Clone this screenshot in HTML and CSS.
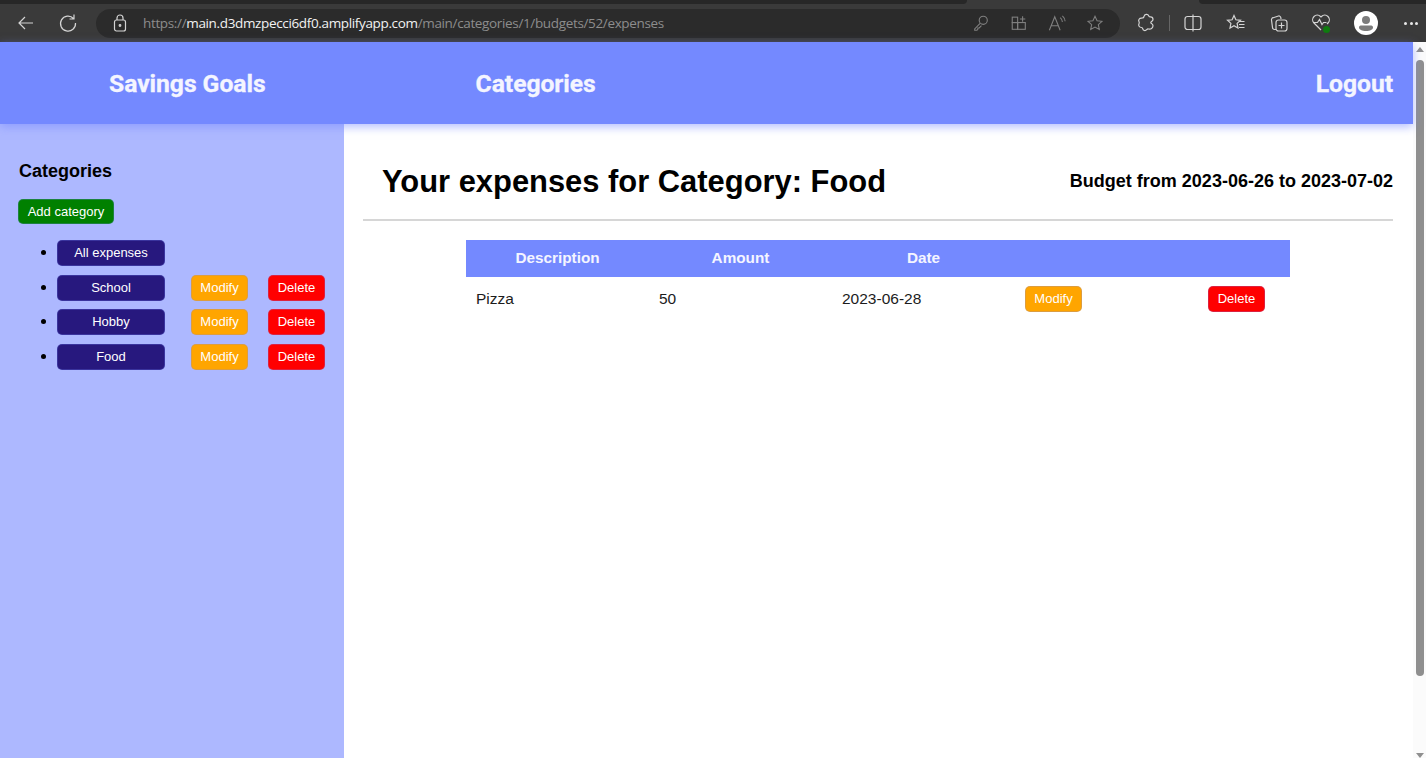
FILE: index.html
```html
<!DOCTYPE html>
<html>
<head>
<meta name="viewport" content="width=device-width, initial-scale=1">
<title>Expenses</title>
<link rel="stylesheet" href="styles.css">
</head>
<body>
<div class="browser">
  <div class="tabstrip">
    <div class="tab-left"></div>
    <div class="tab-right"></div>
  </div>
  <div class="toolbar">
    <svg class="tb-icon tb-back" viewBox="0 0 20 20"><path d="M17 10H3M9 4l-6 6 6 6"/></svg>
    <svg class="tb-icon tb-reload" viewBox="0 0 20 20"><path d="M15.500 5.500A7.500 7.500 0 1 0 17.500 10M16 1.500v4.500h-4.500"/></svg>
    <div class="address">
      <svg class="tb-icon tb-lock" viewBox="0 0 16 20"><rect x="2.500" y="7" width="11" height="11" rx="2"/><path d="M5 7V5a3 3 0 0 1 6 0v2"/><circle cx="8" cy="12.500" r="0.800"/></svg>
      <span class="url"><span class="url-dim">https://</span><span class="url-host">main.d3dmzpecci6df0.amplifyapp.com</span><span class="url-dim">/main/categories/1/budgets/52/expenses</span></span>
      <div class="address-icons">
        <svg class="tb-icon dim" viewBox="0 0 20 20"><circle cx="12.500" cy="7" r="4.500"/><path d="M9 10.500l-6 6v1.500h2.500l1-1v-1.500h1.500l2.500-2.500"/></svg>
        <svg class="tb-icon dim" viewBox="0 0 20 20"><rect x="2.500" y="3.500" width="6" height="6"/><rect x="2.500" y="9.500" width="6" height="7.500"/><rect x="8.500" y="9.500" width="8.500" height="7.500"/><path d="M11 5.500h6M14 2.500v6"/></svg>
        <svg class="tb-icon dim" viewBox="0 0 20 20"><path d="M1.500 18L7.500 3l6 15M3.500 13h8M13.500 4a6 6 0 0 1 2.500 5M16 2a9 9 0 0 1 3 6"/></svg>
        <svg class="tb-icon dim" viewBox="0 0 20 20"><path d="M10 2.500l2.300 5 5.400.6-4 3.700 1.100 5.400L10 14.500l-4.800 2.700 1.100-5.400-4-3.700 5.400-.6z"/></svg>
      </div>
    </div>
    <div class="tools">
      <svg class="tb-icon" viewBox="0 0 20 20"><path d="M8 3.500a2.500 2.500 0 0 1 4.800-.5c.3.800 1 .9 1.700.9 1.500 0 2.500 1 2.500 2.500 0 1-.8 1.600-1.500 2-.9.500-.9 1.700 0 2.200.7.400 1.500 1 1.500 2.100 0 2.300-2.200 3.800-4.500 3.300-.7-.2-1.300.1-1.800.7-1.400 1.700-3.700.9-4-1.100-.1-.7-.6-1.100-1.300-1.100-2 0-3.400-2-2.400-3.800.4-.7.400-1.300 0-2-1-1.800.4-3.600 2.400-3.600 1.500 0 2.600-.7 2.600-1.900z"/></svg>
      <span class="tool-sep"></span>
      <svg class="tb-icon tool-split" viewBox="0 0 20 20"><rect x="2" y="3.500" width="16" height="13" rx="2.500"/><path d="M10 1.500v17"/></svg>
      <svg class="tb-icon tool-fav" viewBox="0 0 20 20"><path d="M8 2.500l1.900 4.300 4.600.5-3.400 3.100.9 4.600L8 12.700l-4 2.300.9-4.600L1.500 7.300l4.600-.5zM13 8.500h5.500M13 11.500h5.500M13 14.500h5.500"/></svg>
      <svg class="tb-icon tool-coll" viewBox="0 0 20 20"><path d="M7 16.500H5.500a2 2 0 0 1-2-2l-1-7.500a2 2 0 0 1 1.700-2.300L9.500 3a2 2 0 0 1 2.300 1.700L12 6"/><rect x="7" y="7" width="11" height="11" rx="2.500"/><path d="M12.500 9.500v6M9.500 12.500h6"/></svg>
      <span class="tool-health">
        <svg class="tb-icon" viewBox="0 0 20 20"><path d="M10 17L3 10a4.500 4.500 0 0 1 6.500-6.500l.5.5.5-.5A4.500 4.500 0 0 1 17 10l-1 1M2 9.500h4.500l2-3 2.500 5 1.500-2h3"/></svg>
        <span class="health-dot"></span>
      </span>
      <span class="avatar">
        <svg viewBox="0 0 24 24"><circle cx="12" cy="12" r="12" fill="#fff"/><circle cx="12" cy="9" r="4" fill="#7b7b7b"/><path d="M5 16.500c0-1.500 1-2 2.500-2h9c1.500 0 2.500.5 2.500 2 0 2-3 3.500-7 3.500s-7-1.500-7-3.500z" fill="#7b7b7b"/></svg>
      </span>
      <span class="more"><i></i><i></i><i></i></span>
    </div>
  </div>
</div>

<div class="window">
  <div class="page">
    <header class="nav">
      <a class="nav-goals">Savings Goals</a>
      <a class="nav-cats">Categories</a>
      <a class="nav-logout">Logout</a>
    </header>
    <div class="content">
      <aside class="sidebar">
        <h3>Categories</h3>
        <button class="btn btn-add">Add category</button>
        <ul class="cat-list">
          <li><div class="cat-row"><button class="btn btn-cat">All expenses</button></div></li>
          <li><div class="cat-row"><button class="btn btn-cat">School</button><button class="btn btn-modify">Modify</button><button class="btn btn-delete">Delete</button></div></li>
          <li><div class="cat-row"><button class="btn btn-cat">Hobby</button><button class="btn btn-modify">Modify</button><button class="btn btn-delete">Delete</button></div></li>
          <li><div class="cat-row"><button class="btn btn-cat">Food</button><button class="btn btn-modify">Modify</button><button class="btn btn-delete">Delete</button></div></li>
        </ul>
      </aside>
      <main class="main">
        <div class="main-head">
          <h1>Your expenses for Category: Food</h1>
          <h2>Budget from 2023-06-26 to 2023-07-02</h2>
        </div>
        <hr>
        <table class="expenses">
          <thead>
            <tr><th>Description</th><th>Amount</th><th>Date</th><th></th><th></th></tr>
          </thead>
          <tbody>
            <tr>
              <td>Pizza</td>
              <td>50</td>
              <td>2023-06-28</td>
              <td><button class="btn btn-modify">Modify</button></td>
              <td><button class="btn btn-delete">Delete</button></td>
            </tr>
          </tbody>
        </table>
      </main>
    </div>
  </div>
  <div class="scrollbar">
    <span class="arrow-up"></span>
    <span class="thumb"></span>
    <span class="arrow-down"></span>
  </div>
</div>
</body>
</html>
```

FILE: styles.css
```css
* {
  box-sizing: border-box;
}
html, body {
  height: 100%;
}
body {
  margin: 0;
  display: flex;
  flex-direction: column;
  overflow: hidden;
  font-family: "Liberation Sans", Arial, sans-serif;
  background: #fff;
  color: #000;
}

/* browser chrome */
.browser {
  height: 42px;
  flex: none;
  background: #3a3a3a;
  display: flex;
  flex-direction: column;
}
.tabstrip {
  height: 5px;
  display: flex;
  justify-content: space-between;
}
.tab-left {
  width: 967px;
  height: 4px;
  background: #272727;
  border-bottom-right-radius: 6px;
}
.tab-right {
  width: 227px;
  height: 4px;
  background: #272727;
  border-bottom-left-radius: 6px;
}
.toolbar {
  height: 37px;
  display: flex;
  align-items: center;
  padding-bottom: 1px;
}
.tb-icon {
  width: 20px;
  height: 20px;
  fill: none;
  stroke: #d4d4d4;
  stroke-width: 1.2;
  flex: none;
}
.tb-icon.dim {
  stroke: #808080;
}
.tb-back {
  margin-left: 16px;
}
.tb-reload {
  margin-left: 22px;
}
.address {
  width: 1024px;
  height: 29px;
  margin-left: 18px;
  border-radius: 15px;
  background: #2b2b2b;
  display: flex;
  align-items: center;
  padding-left: 16px;
}
.tb-lock {
  width: 16px;
  height: 20px;
}
.url {
  margin-left: 15px;
  font-family: "Open Sans", sans-serif;
  font-size: 13.5px;
  letter-spacing: -0.35px;
  white-space: nowrap;
}
.url-dim {
  color: #8d8d8d;
}
.url-host {
  color: #f2f2f2;
}
.address-icons {
  margin-left: auto;
  margin-right: 16px;
  display: flex;
  gap: 20px;
}
.address-icons .tb-icon {
  width: 18px;
  height: 18px;
}
.tools {
  display: flex;
  align-items: center;
  margin-left: 16px;
}
.tool-sep {
  width: 1px;
  height: 16px;
  background: #666;
  margin-left: 13px;
}
.tool-split {
  margin-left: 13px;
}
.tool-fav {
  margin-left: 23px;
}
.tool-coll {
  margin-left: 23px;
}
.tool-health {
  position: relative;
  margin-left: 22px;
  display: flex;
}
.health-dot {
  position: absolute;
  right: 1px;
  bottom: 0;
  width: 7px;
  height: 7px;
  border-radius: 50%;
  background: #0f7b0f;
}
.avatar {
  width: 24px;
  height: 24px;
  margin-left: 23px;
  display: flex;
}
.more {
  display: flex;
  gap: 2.500px;
  margin-left: 26px;
}
.more i {
  width: 3px;
  height: 3px;
  border-radius: 50%;
  background: #e8e8e8;
}

/* page */
.window {
  flex: 1;
  display: flex;
  min-height: 0;
}
.page {
  flex: 1;
  min-width: 0;
  display: flex;
  flex-direction: column;
}
.nav {
  height: 82px;
  flex: none;
  background: #7489ff;
  box-shadow: 0 3px 9px rgba(116, 137, 255, 0.55);
  position: relative;
  display: flex;
  align-items: center;
  font-family: Roboto, sans-serif;
  font-weight: 700;
  font-size: 24.7px;
  letter-spacing: -0.05px;
  -webkit-text-stroke: 0.3px #f4f5ff;
  color: #f4f5ff;
  padding: 1px 20px 0 109px;
}
.nav-cats {
  margin-left: 210px;
}
.nav-logout {
  margin-left: auto;
}
.content {
  flex: 1;
  display: flex;
  min-height: 0;
}
.sidebar {
  width: 344px;
  flex: none;
  background: #adb8ff;
  padding: 37px 18px 0;
}
.sidebar h3 {
  margin: 0 0 18px;
  font-size: 18px;
  line-height: 20px;
  font-weight: 700;
  padding-left: 1px;
}
.btn {
  border: 1px solid rgba(116, 137, 255, 0.25);
  border-radius: 5px;
  color: #fff;
  font-family: inherit;
  font-size: 13px;
  height: 26px;
  padding: 0 0 1px;
  display: block;
  flex: none;
}
.btn-add {
  width: 96px;
  height: 25px;
  background: #008000;
}
.btn-cat {
  width: 108px;
  background: #27187e;
}
.btn-modify {
  width: 57px;
  background: #ffa500;
}
.btn-delete {
  width: 57px;
  background: #ff0000;
}
.cat-list {
  margin: 16px 0 0;
  padding: 0 0 0 39px;
}
.cat-list li {
  margin-bottom: 8.700px;
}
.cat-row {
  display: flex;
  height: 26px;
}
.cat-row .btn-modify {
  margin-left: 26px;
}
.cat-row .btn-delete {
  margin-left: 20px;
}
.main {
  flex: 1;
  min-width: 0;
  padding: 0 20px 0 19px;
}
.main-head {
  height: 95px;
  display: flex;
  align-items: center;
  justify-content: space-between;
  padding: 20px 0 0 19px;
}
.main-head h1 {
  margin: 0;
  font-size: 30.900px;
  font-weight: 700;
}
.main-head h2 {
  margin: 0;
  font-size: 18px;
  font-weight: 700;
}
hr {
  margin: 0;
  border: 0;
  border-top: 2px solid #d6d6d6;
}
.expenses {
  margin: 19px 0 0 103px;
  width: 824px;
  table-layout: fixed;
  border-collapse: collapse;
  font-size: 15.500px;
}
.expenses th {
  width: 183px;
  height: 37px;
  padding: 0 0 2px;
  background: #7489ff;
  color: #f4f5ff;
  font-weight: 700;
  font-size: 15.300px;
}
.expenses th:last-child {
  width: 92px;
}
.expenses td {
  height: 44px;
  padding: 0 0 0 10px;
  color: #1c1c1c;
}

/* scrollbar */
.scrollbar {
  width: 13px;
  flex: none;
  background: #fbfbfb;
  display: flex;
  flex-direction: column;
  align-items: center;
}
.arrow-up {
  margin-top: 5px;
  border: 4px solid transparent;
  border-top: 0;
  border-bottom: 5px solid #8f8f8f;
}
.thumb {
  width: 8px;
  height: 616px;
  margin-top: 8px;
  border-radius: 4px;
  background: #8f8f8f;
}
.arrow-down {
  margin-top: auto;
  border: 4px solid transparent;
  border-bottom: 0;
  border-top: 5px solid #8f8f8f;
}
```
